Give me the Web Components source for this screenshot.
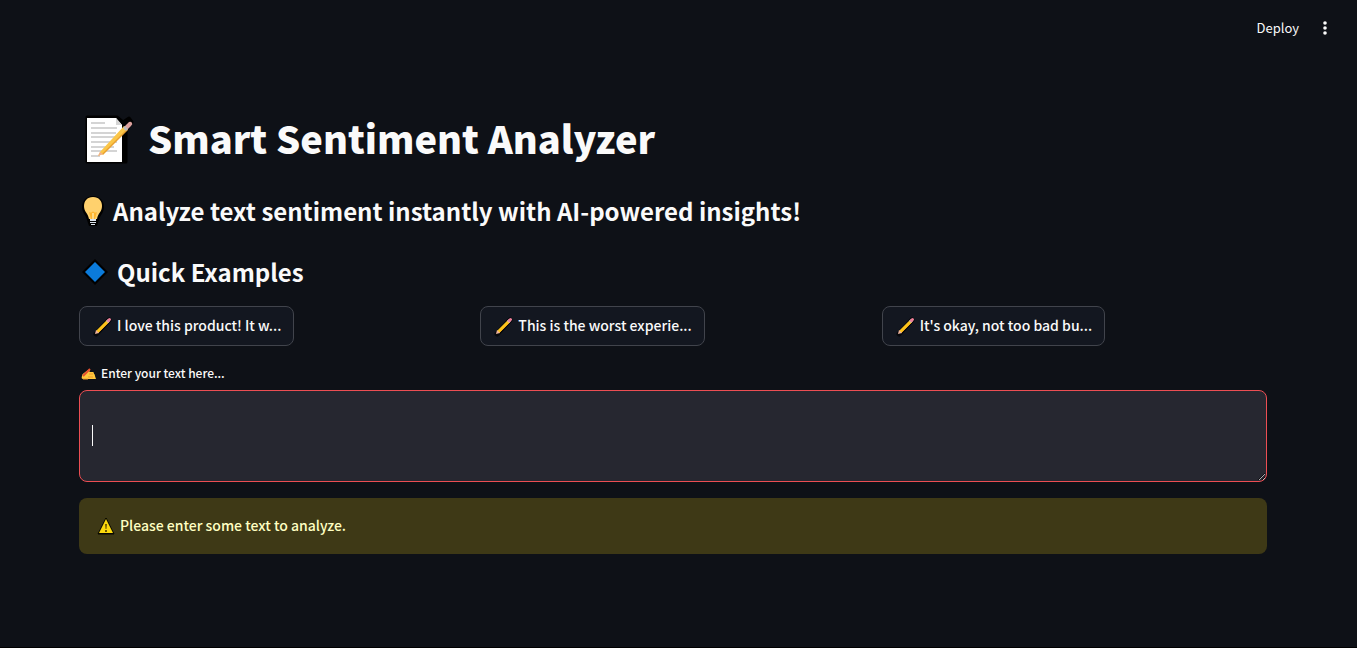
<!DOCTYPE html>
<html lang="en">
<head>
<meta charset="utf-8">
<meta name="viewport" content="width=device-width, initial-scale=1">
<title>Smart Sentiment Analyzer</title>
<style>
  html { background: #0e1117; }
  body {
    margin: 0;
    color: #fafafa;
    font: 500 14px/24px "Source Sans Pro", "Noto Sans CJK SC", "Noto Sans", sans-serif;
  }
</style>
</head>
<body>
<sentiment-app></sentiment-app>

<script>
const ICONS = {
  memo: `<svg viewBox="1 0 56 56" width="56" height="56">
    <path d="M9 5h30l6 5 6-4 3 4-6 9v31H9z" fill="#000" stroke="#000" stroke-width="3" stroke-linejoin="round"/>
    <path d="M9 6h29l6 7v37H9z" fill="#fff"/><path d="M38 6v7h6z" fill="#d5d5d5"/>
    <path d="M13 11h14M13 16h26M13 21h25M13 25h24M13 30h26M13 35h23M13 39h26M13 44h9" stroke="#a9a9a9" stroke-width="1.2"/>
    <path d="M22 40 46 14l4 3-25 25-5 2z" fill="#fbc648"/><path d="m24 42 25-25 1 1-25 25z" fill="#e9a02f"/>
    <path d="m22 40 3 2-5 2z" fill="#f0b090"/><path d="m46 15 5-5q2-1 3 1 1 1-1 3l-4 4z" fill="#dba09d"/><path d="m45 16 2-2 3 3-2 2z" fill="#bbb"/></svg>`,
  bulb: `<svg viewBox="0 0 28 32" width="28" height="32">
    <path d="M14 1C7 1 3 6 3 12c0 6 4 8 5 13l2 6h8l2-6c1-5 5-7 5-13 0-6-4-11-11-11z" fill="#000"/>
    <path d="M14 2C8 2 5 6 5 11c0 6 4 7 5 13h8c1-6 5-7 5-13 0-5-3-9-9-9z" fill="#ffd16d"/>
    <path d="M10 17q2 1 3 0 1-1 2 0 1 1 3 0l-2 7h-4z" fill="#ffb52e"/>
    <path d="M13 18h2v6h-2z" fill="#ffd982"/><path d="M11 24h6v2h-6zm0 3h6v1h-6zm1 2h4v1h-4z" fill="#d9e2ed"/></svg>`,
  diamond: `<svg viewBox="-2 0 32 28" width="32" height="28"><path d="M14 1 27 14 14 27 1 14z" fill="#000"/><path d="M14 4 24 14 14 24 4 14z" fill="#0b7bdb"/></svg>`,
  pencil: `<svg viewBox="0 0 22 22" width="22" height="22">
    <path d="M4 19 17 5" stroke="#07090c" stroke-width="5" stroke-linecap="round"/>
    <path d="M5 17 16 6" stroke="#fbc31a" stroke-width="3"/>
    <path d="M6 18 17 7" stroke="#eba416" stroke-width="1"/>
    <path d="m3 19 1-4 3 3z" fill="#edb39e"/>
    <path d="m15 7 2-2" stroke="#c9b9bd" stroke-width="3"/>
    <path d="m16.500 5.500 1-1" stroke="#ee7f98" stroke-width="3" stroke-linecap="round"/></svg>`,
  writing: `<svg viewBox="0 0 18 16" width="18" height="16">
    <path d="M3 11q0-2 2-3l4-3q2-1 2 1l-1 1h4q1 0 1 2 1 0 1 2l1 3H4q-2 0-1-3z" fill="#ffc83d"/>
    <path d="m10 9 4 0M9 12h5M4 14h5" fill="none" stroke="#ef9a2c"/>
    <path d="m4 11 7-7" stroke="#e8502f" stroke-width="2"/></svg>`,
  warning: `<svg viewBox="0 0 18 18" width="18" height="18">
    <path d="M9 1 17 17H1z" fill="#080800" stroke="#080800" stroke-linejoin="round"/><path d="M9 2 16 16H2z" fill="#fcd90c"/>
    <path d="M8 7h2l-.5 5h-1zM8 13h2v2H8z" fill="#705a00"/></svg>`
};

function define(name, markup, setup) {
  const template = document.createElement('template');
  template.innerHTML = markup;
  customElements.define(name, class extends HTMLElement {
    constructor() {
      super();
      this.attachShadow({ mode: 'open' }).append(template.content.cloneNode(true));
    }
    connectedCallback() { if (setup) setup(this, this.shadowRoot); }
  });
}

define('emoji-icon', `
  <style>:host { display: inline-flex; flex: none; } svg { display: block; }</style><span aria-hidden="true"></span>`,
  (host, root) => { root.querySelector('span').innerHTML = ICONS[host.getAttribute('name')]; });

define('app-toolbar', `
  <style>
    :host { display: flex; justify-content: flex-end; align-items: center; gap: 8px; height: 56px; padding-right: 20px; }
    button { display: flex; align-items: center; justify-content: center; border: 0; background: none; color: inherit; padding: 0 6px; height: 28px; font: inherit; font-size: 13px; font-weight: 400; cursor: pointer; }
    .menu { width: 24px; padding: 0; }
  </style>
  <button type="button">Deploy</button>
  <button class="menu" type="button" aria-label="Main menu">
    <svg width="16" height="20" viewBox="0 0 16 20" fill="#fafafa"><circle cx="8" cy="5" r="1.8"/><circle cx="8" cy="10" r="1.8"/><circle cx="8" cy="15" r="1.8"/></svg>
  </button>`);

define('page-title', `
  <style>
    :host { display: block; }
    h1 { display: flex; align-items: center; gap: 13px; margin: 0; font-size: 38px; line-height: 52px; font-weight: 900; }
    span { padding-bottom: 4px; }
  </style>
  <h1><emoji-icon name="memo"></emoji-icon><span><slot></slot></span></h1>`);

define('section-heading', `
  <style>
    :host { display: block; }
    h3 { display: flex; align-items: center; gap: 6px; margin: 0; font-size: 24px; line-height: 36px; font-weight: 600; }
  </style>
  <h3><emoji-icon></emoji-icon><span><slot></slot></span></h3>`,
  (host, root) => {
    const icon = document.createElement('emoji-icon');
    icon.setAttribute('name', host.getAttribute('icon'));
    root.querySelector('emoji-icon').replaceWith(icon);
  });

define('example-button', `
  <style>
    :host { display: block; }
    button { display: flex; align-items: center; gap: 3px; height: 40px; padding: 0 12px; border: 1px solid #41444c; border-radius: 8px; background: #131720; color: inherit; font: inherit; white-space: nowrap; cursor: pointer; }
    span { padding-bottom: 2px; }
  </style>
  <button type="button"><emoji-icon name="pencil"></emoji-icon><span><slot></slot></span></button>`);

define('text-entry', `
  <style>
    :host { display: block; }
    label { display: flex; align-items: center; gap: 4px; font-size: 12px; line-height: 20px; margin-bottom: 7px; }
    .field { position: relative; }
    textarea { display: block; box-sizing: border-box; width: 100%; height: 92px; padding: 12px; border: 1px solid #ec4e53; border-radius: 8px; outline: 0; background: #262730; color: inherit; caret-color: transparent; font: inherit; resize: vertical; }
    .caret { position: absolute; left: 13px; top: 35px; width: 1px; height: 21px; background: #fafafa; pointer-events: none; }
  </style>
  <label for="entry"><emoji-icon name="writing"></emoji-icon><span><slot></slot></span></label>
  <div class="field"><textarea id="entry"></textarea><span class="caret"></span></div>`);

define('alert-box', `
  <style>
    :host { display: flex; align-items: center; gap: 5px; box-sizing: border-box; min-height: 56px; padding: 15px 18px; border-radius: 8px; background: #3e3916; color: #ffffc2; }
    span { padding-bottom: 2px; }
  </style>
  <emoji-icon name="warning"></emoji-icon><span role="alert"><slot></slot></span>`);

define('sentiment-app', `
  <style>
    :host { display: flex; flex-direction: column; box-sizing: border-box; min-height: 100vh; border-bottom: 1px solid #000; }
    main { display: flex; flex-direction: column; padding: 56px 90px 40px 79px; }
    .subtitle { margin-top: 25px; }
    .quick { margin-top: 25px; }
    .examples { display: grid; grid-template-columns: repeat(3, minmax(0, 1fr)); gap: 16px; margin-top: 16px; }
    text-entry { margin-top: 17px; }
    alert-box { margin-top: 16px; }
  </style>
  <app-toolbar></app-toolbar>
  <main>
    <page-title>Smart Sentiment Analyzer</page-title>
    <section-heading class="subtitle" icon="bulb">Analyze text sentiment instantly with AI-powered insights!</section-heading>
    <section-heading class="quick" icon="diamond">Quick Examples</section-heading>
    <div class="examples">
      <example-button>I love this product! It w...</example-button>
      <example-button>This is the worst experie...</example-button>
      <example-button>It's okay, not too bad bu...</example-button>
    </div>
    <text-entry>Enter your text here...</text-entry>
    <alert-box>Please enter some text to analyze.</alert-box>
  </main>`);
</script>
</body>
</html>
